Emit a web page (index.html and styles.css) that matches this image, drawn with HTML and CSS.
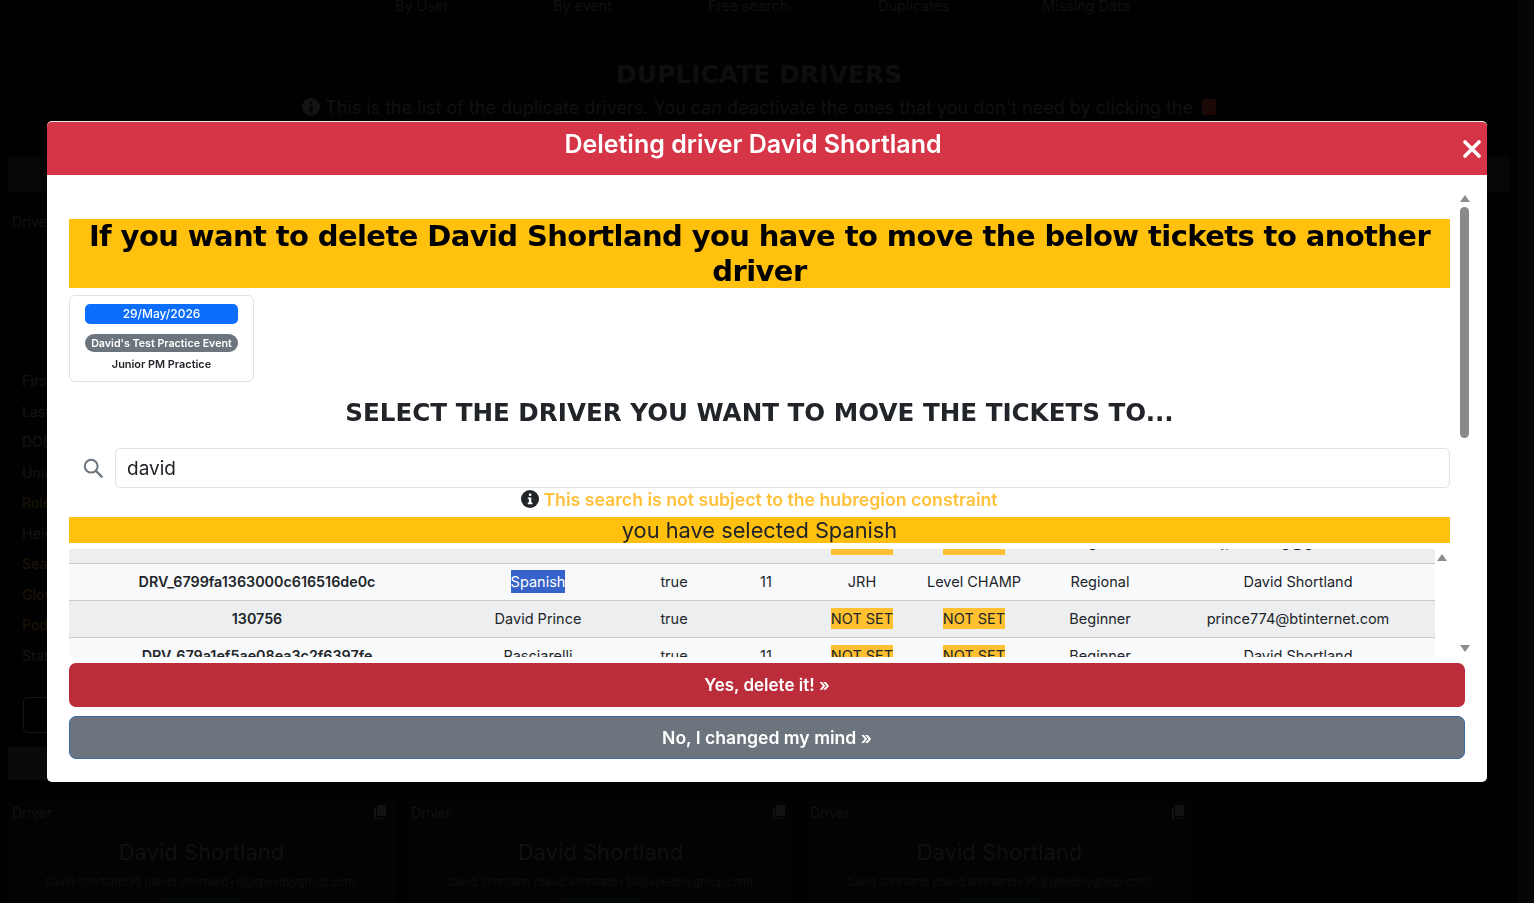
FILE: index.html
```html
<!DOCTYPE html>
<html lang="en">
<head>
<meta charset="utf-8">
<title>Duplicate drivers</title>
<link rel="stylesheet" href="styles.css">
</head>
<body>
<div class="page">
  <nav class="topnav">
    <span>By User</span><span>By event</span><span>Free search</span><span>Duplicates</span><span>Missing Data</span>
  </nav>
  <h1 class="page-title">DUPLICATE DRIVERS</h1>
  <p class="page-sub">
    <svg viewBox="0 0 18 18" width="18" height="18"><circle cx="9" cy="9" r="9" fill="#131313"/><rect x="7.8" y="3.4" width="2.6" height="2.6" fill="#030303"/><rect x="7.8" y="7.4" width="2.6" height="6.8" fill="#030303"/></svg>
    <span>This is the list of the duplicate drivers. You can deactivate the ones that you don't need by clicking the</span>
    <span class="bin"></span>
  </p>
  <div class="page-bar"></div>
  <section class="big-card">
    <div class="card-label">Driver</div>
    <div class="field-list">
      <div>First name</div><div>Last name</div><div>DOB</div><div>Unique</div>
      <div class="warm">Role</div><div>Height</div><div class="warm">Seat</div><div class="warm">Glove</div><div class="warm">Pod</div><div>Status</div>
    </div>
    <div class="ghost-btn"></div>
  </section>
  <div class="page-bar short"></div>
  <section class="card-row">
    <article class="mini-card">
      <div class="mini-top">
        <div class="card-label">Driver</div>
        <svg class="copy" viewBox="0 0 14 16" width="14" height="16"><path d="M4 1h9v11H4zM1 4h2v10h8v1H1z" fill="#121212"/></svg>
      </div>
      <div class="mini-name">David Shortland</div>
      <div class="mini-mail">David Shortland30 (david.shortland+6@speedeygroup.com)</div>
      <div class="mini-go"></div>
    </article>
    <article class="mini-card">
      <div class="mini-top">
        <div class="card-label">Driver</div>
        <svg class="copy" viewBox="0 0 14 16" width="14" height="16"><path d="M4 1h9v11H4zM1 4h2v10h8v1H1z" fill="#121212"/></svg>
      </div>
      <div class="mini-name">David Shortland</div>
      <div class="mini-mail">David Shortland (david.shortland+30@speedeygroup.com)</div>
      <div class="mini-go"></div>
    </article>
    <article class="mini-card">
      <div class="mini-top">
        <div class="card-label">Driver</div>
        <svg class="copy" viewBox="0 0 14 16" width="14" height="16"><path d="M4 1h9v11H4zM1 4h2v10h8v1H1z" fill="#121212"/></svg>
      </div>
      <div class="mini-name">David Shortland</div>
      <div class="mini-mail">David Shortland (david.shortland+30@speedeygroup.com)</div>
      <div class="mini-go"></div>
    </article>
  </section>
</div>
<div class="page-scroll"></div>

<div class="backdrop">
  <div class="modal">
    <header class="modal-head">
      <h2>Deleting driver David Shortland</h2>
      <svg class="close" viewBox="0 0 18 18" width="18" height="18"><path d="M2 2l14 14M16 2L2 16" stroke="#fff" stroke-width="3.6" stroke-linecap="round"/></svg>
    </header>
    <div class="modal-body">
      <div class="scroller">
        <div class="scroll-content">
          <h3 class="warn">If you want to delete David Shortland you have to move the below tickets to another driver</h3>
          <div class="ticket">
            <div class="pill-date">29/May/2026</div>
            <div class="pill-event">David's Test Practice Event</div>
            <div class="ticket-name">Junior PM Practice</div>
          </div>
          <h4 class="select-title">SELECT THE DRIVER YOU WANT TO MOVE THE TICKETS TO...</h4>
          <div class="search">
            <svg class="search-icon" viewBox="0 0 20 20" width="20" height="20"><circle cx="8.2" cy="8.2" r="6.4" fill="none" stroke="#6c757d" stroke-width="2"/><path d="M13 13l5.6 5.6" stroke="#6c757d" stroke-width="2.4" stroke-linecap="round"/></svg>
            <div class="search-input">david</div>
          </div>
          <div class="notice">
            <svg viewBox="0 0 18 18" width="18" height="18"><circle cx="9" cy="9" r="9" fill="#212529"/><rect x="7.8" y="3.4" width="2.6" height="2.6" rx="1" fill="#fff"/><path d="M6.8 7.4h3.5v5.2h1.1v1.6H6.8v-1.6h1.1V9H6.8z" fill="#fff"/></svg>
            <span>This search is not subject to the hubregion constraint</span>
          </div>
          <div class="selected-bar">you have selected Spanish</div>
          <div class="table-wrap">
            <table class="drivers">
              <colgroup>
                <col class="c1"><col class="c2"><col class="c3"><col class="c4"><col class="c5"><col class="c6"><col class="c7"><col class="c8">
              </colgroup>
              <tbody>
                <tr class="even clipped"><th>11077</th><td></td><td></td><td></td><td><mark>NOT SET</mark></td><td><mark>NOT SET</mark></td><td>Regional</td><td>jpeterking@gmail.com</td></tr>
                <tr><th>DRV_6799fa1363000c616516de0c</th><td><span class="picked">Spanish</span></td><td>true</td><td>11</td><td>JRH</td><td>Level CHAMP</td><td>Regional</td><td>David Shortland</td></tr>
                <tr class="even"><th>130756</th><td>David Prince</td><td>true</td><td></td><td><mark>NOT SET</mark></td><td><mark>NOT SET</mark></td><td>Beginner</td><td>prince774@btinternet.com</td></tr>
                <tr><th>DRV_679a1ef5ae08ea3c2f6397fe</th><td>Rasciarelli</td><td>true</td><td>11</td><td><mark>NOT SET</mark></td><td><mark>NOT SET</mark></td><td>Beginner</td><td>David Shortland</td></tr>
              </tbody>
            </table>
            <div class="inner-bar"><span class="arrow up"></span></div>
          </div>
        </div>
        <div class="outer-bar">
          <span class="arrow up"></span>
          <span class="thumb"></span>
          <span class="arrow down"></span>
        </div>
      </div>
      <button class="btn btn-danger">Yes, delete it! &raquo;</button>
      <button class="btn btn-grey">No, I changed my mind &raquo;</button>
    </div>
  </div>
</div>
</body>
</html>
```
FILE: styles.css
```css
* { box-sizing: border-box; }
html, body { margin: 0; height: 100%; overflow: hidden; }
body {
  background: #010101;
  font-family: "Inter", "Noto Sans", sans-serif;
  color: #212529;
}
h1, h2, h3, h4, p { margin: 0; }

/* dimmed page behind the modal */
.page { width: 1518px; height: 903px; overflow: hidden; padding: 0 8px; color: #101010; }
.topnav { display: grid; grid-template-columns: 158px 155px 170px 164px auto; height: 13px; padding-left: 387px; font-size: 14.4px; line-height: 12px; }
.page-title {
  margin-top: 49px; text-align: center; font: 700 25px/26px "DejaVu Sans", sans-serif; color: #0e0e0e;
}
.page-sub {
  display: flex; align-items: center; justify-content: center; gap: 5px;
  margin-top: 7px; height: 24px; font-size: 18px; white-space: nowrap; color: #111;
}
.bin { width: 14px; height: 16px; margin-left: 4px; background: #1c0806; border-radius: 2px; }
.page-bar { height: 36px; margin-top: 37px; background: #050605; }
.page-bar.short { height: 33px; margin-top: 9px; width: 380px; background: #0a0a0a; }
.big-card { height: 525px; width: 380px; margin-top: 21px; padding-left: 4px; }
.card-label { font-size: 14px; line-height: 18px; color: #111; }
.field-list { margin-top: 135px; padding-left: 10px; font-size: 14px; font-weight: 500; line-height: 30.5px; color: #121212; }
.warm { color: #1a1206; }
.ghost-btn { width: 70px; height: 36px; margin: 26px 0 0 11px; border: 1px solid #151515; border-radius: 5px; }
.card-row { display: grid; grid-template-columns: repeat(3, 387px); gap: 12px; margin-top: 18px; }
.mini-card { height: 110px; padding: 6px 4px 0; background: #020302; }
.mini-top { display: flex; justify-content: space-between; padding-right: 4px; height: 18px; }
.copy { flex: none; }
.mini-name { margin-top: 4px; padding-top: 11px; text-align: center; font-size: 22px; line-height: 28px; color: #101010; border-top: 1px solid #060606; }
.mini-mail { margin-top: 9px; text-align: center; font-size: 11px; line-height: 14px; color: #0f0f0f; white-space: nowrap; }
.mini-go { width: 80px; height: 8px; margin: 9px auto 0; background: #030804; }
.page-scroll { position: fixed; top: 0; right: 0; bottom: 0; width: 16px; background: #050505; }

/* modal */
.backdrop { position: fixed; inset: 0; display: flex; align-items: flex-start; justify-content: flex-start; padding: 121px 0 0 47px; }
.modal {
  width: 1440px; height: 661px; display: flex; flex-direction: column;
  background: #fff; border-radius: 5px; overflow: hidden; border-top: 1px solid #e9e9e9;
}
.modal-head {
  position: relative; flex: none; height: 53px; background: #d63447;
  display: flex; align-items: flex-start; justify-content: center; padding: 0 28px 0 0;
}
.modal-head h2 { color: #fff; font-size: 25px; font-weight: 600; line-height: 44px; }
.close { position: absolute; right: 6px; top: 18px; }
.modal-body { flex: 1; display: flex; flex-direction: column; padding: 0 22px; min-height: 0; }
.scroller { position: relative; flex: none; height: 485px; margin-right: -7px; display: flex; overflow: hidden; }
.scroll-content { flex: none; width: 1381px; padding-top: 44px; }

.warn {
  background: #ffc10e; color: #000; text-align: center;
  font: 700 29px/34.5px "DejaVu Sans", sans-serif; letter-spacing: -0.6px;
}
.ticket {
  width: 185px; height: 87px; margin-top: 7px; padding: 8px 15px 0;
  border: 1px solid #dee2e6; border-radius: 6px; text-align: center;
}
.pill-date { height: 20px; background: #0d6efd; color: #fff; border-radius: 5px; font-size: 12px; font-weight: 500; line-height: 20px; }
.pill-event { height: 18px; margin-top: 10px; background: #6c757d; color: #fff; border-radius: 9px; font-size: 10.7px; font-weight: 600; line-height: 19px; white-space: nowrap; }
.ticket-name { margin-top: 4px; font-size: 10.9px; font-weight: 600; line-height: 16px; color: #212529; }
.select-title { margin-top: 18px; text-align: center; font: 700 24.6px/26px "DejaVu Sans", sans-serif; color: #212529; }
.search { display: flex; align-items: center; margin-top: 22px; height: 40px; }
.search-icon { flex: none; margin: 0 12px 0 14px; }
.search-input { flex: 1; height: 40px; padding: 0 11px; border: 1px solid #dee2e6; border-radius: 5px; font-size: 19px; line-height: 40px; color: #212529; }
.notice { display: flex; align-items: center; justify-content: center; gap: 4px; height: 22px; font-size: 17.7px; font-weight: 600; color: #ffc13a; }
.selected-bar { height: 26px; margin-top: 7px; background: #ffc10e; text-align: center; font-size: 21.8px; line-height: 27px; color: #212529; }

.table-wrap { position: relative; margin-top: 6px; height: 108px; overflow: hidden; }
.drivers { width: 1366px; margin-top: -23px; border-collapse: collapse; table-layout: fixed; font-size: 14.5px; color: #212529; }
.drivers th, .drivers td { height: 37px; padding: 0 4px; text-align: center; font-weight: 400; border-bottom: 1px solid #c9cbcd; white-space: nowrap; }
.drivers th { font-weight: 600; font-size: 14.3px; }
.drivers tr { background: #f8f9fa; }
.drivers tr.even { background: #eceef0; }
.drivers tr.clipped th, .drivers tr.clipped td { padding-bottom: 5px; }
.clipped mark { padding-bottom: 5px; }
.c1 { width: 376px; } .c2 { width: 186px; } .c3 { width: 86px; } .c4 { width: 98px; }
.c5 { width: 94px; } .c6 { width: 130px; } .c7 { width: 122px; } .c8 { width: 274px; }
mark { background: #ffc131; color: #212529; padding: 2px 0; }
.picked { background: #3563c9; color: #fff; padding: 3px 0; }

.arrow { display: block; width: 0; height: 0; border-left: 5px solid transparent; border-right: 5px solid transparent; }
.arrow.up { border-bottom: 7px solid #8c8c8c; }
.arrow.down { border-top: 7px solid #8c8c8c; }
.inner-bar { position: absolute; top: 5px; left: 1368px; }
.outer-bar { position: absolute; top: 20px; right: 0; width: 15px; display: flex; flex-direction: column; align-items: center; }
.thumb { width: 9px; height: 231px; margin-top: 5px; background: #8a8a8a; border-radius: 5px; }
.outer-bar .arrow.down { margin-top: 207px; }

.btn {
  display: block; width: 100%; font-family: inherit; font-size: 17px; font-weight: 600; color: #fff;
  border-radius: 7px; text-align: center; border: 0;
}
.btn-danger { height: 44px; margin-top: 3px; background: #bb2d3b; }
.btn-grey { height: 43px; margin-top: 9px; background: #6c757d; border: 1px solid #3b6aa8; font-size: 17.6px; }
```
